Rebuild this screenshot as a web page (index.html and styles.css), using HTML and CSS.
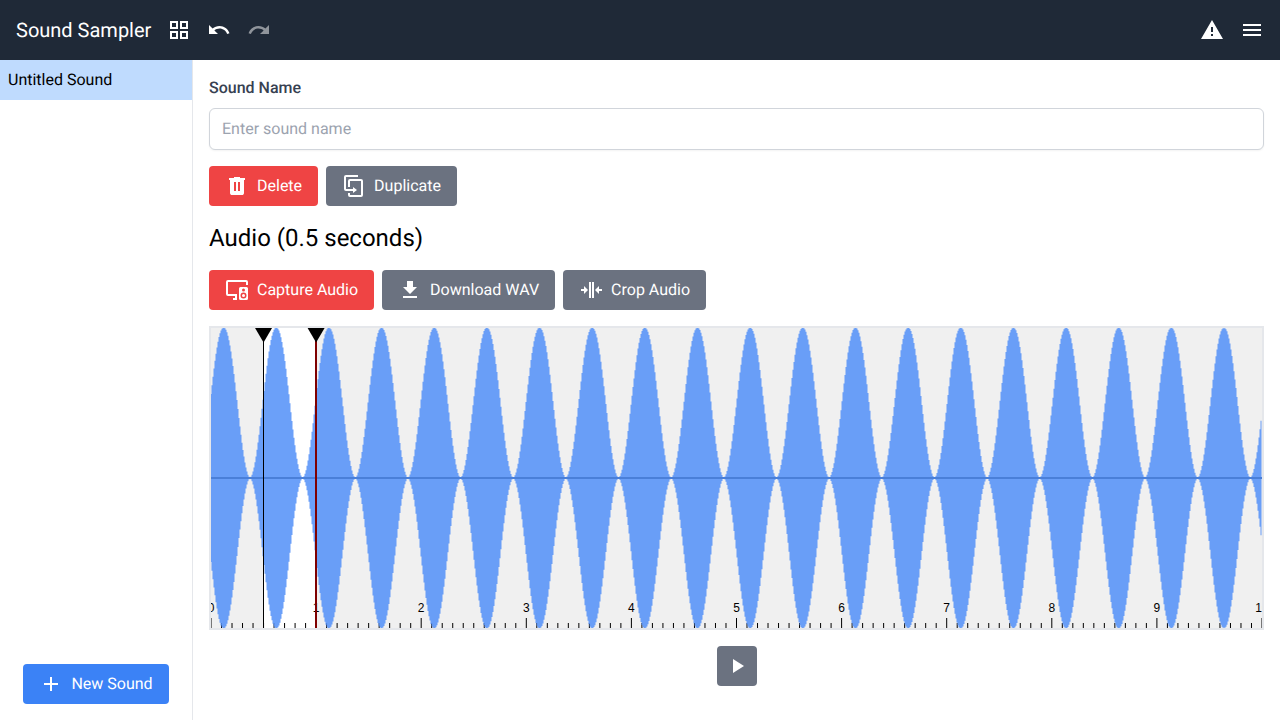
FILE: index.html
```html
<!DOCTYPE html>
<html lang="en">
<head>
<meta charset="utf-8">
<meta name="viewport" content="width=device-width, initial-scale=1">
<title>Sound Sampler</title>
<link rel="stylesheet" href="styles.css">
</head>
<body>
<div class="app">
  <header class="topbar">
    <h1 class="brand">Sound Sampler</h1>
    <button class="icon-button" type="button" aria-label="Apps">
      <svg class="icon" viewBox="0 0 24 24"><path d="M3 3v8h8V3H3zm6 6H5V5h4v4zm-6 4v8h8v-8H3zm6 6H5v-4h4v4zm4-16v8h8V3h-8zm6 6h-4V5h4v4zm-6 4v8h8v-8h-8zm6 6h-4v-4h4v4z"/></svg>
    </button>
    <button class="icon-button" type="button" aria-label="Undo">
      <svg class="icon" viewBox="0 0 24 24"><path d="M12.5 8c-2.65 0-5.05.99-6.9 2.6L2 7v9h9l-3.62-3.62c1.39-1.16 3.16-1.88 5.12-1.88 3.54 0 6.55 2.31 7.6 5.5l2.37-.78C21.08 11.03 17.15 8 12.5 8z"/></svg>
    </button>
    <button class="icon-button" type="button" aria-label="Redo" disabled>
      <svg class="icon" viewBox="0 0 24 24"><path d="M18.4 10.6C16.55 8.99 14.15 8 11.5 8c-4.65 0-8.58 3.03-9.96 7.22L3.9 16c1.05-3.19 4.05-5.5 7.6-5.5 1.95 0 3.73.72 5.12 1.88L13 16h9V7l-3.6 3.6z"/></svg>
    </button>
    <span class="spacer"></span>
    <button class="icon-button" type="button" aria-label="Warnings">
      <svg class="icon" viewBox="0 0 24 24"><path d="M13 14h-2V9h2m0 9h-2v-2h2M1 21h22L12 2 1 21z"/></svg>
    </button>
    <button class="icon-button" type="button" aria-label="Menu">
      <svg class="icon" viewBox="0 0 24 24"><path d="M3 18h18v-2H3v2zm0-5h18v-2H3v2zm0-7v2h18V6H3z"/></svg>
    </button>
  </header>
  <div class="body">
    <aside class="sidebar">
      <ul class="sounds">
        <li><button class="sound" type="button">Untitled Sound</button></li>
      </ul>
      <div class="sidebar-footer">
        <button class="button primary" type="button">
          <svg class="icon" viewBox="0 0 24 24"><path d="M19 13h-6v6h-2v-6H5v-2h6V5h2v6h6v2z"/></svg>
          New Sound
        </button>
      </div>
    </aside>
    <main class="editor">
      <div class="field">
        <label class="label" for="sound-name">Sound Name</label>
        <input class="input" id="sound-name" type="text" placeholder="Enter sound name">
      </div>
      <div class="actions">
        <button class="button danger" type="button">
          <svg class="icon" viewBox="0 0 24 24"><path fill-rule="evenodd" d="M7 21q-.825 0-1.412-.587T5 19V6H4V4h5V3h6v1h5v2h-1v13q0 .825-.587 1.413T17 21zm2-4h2V8H9zm4 0h2V8h-2z"/></svg>
          Delete
        </button>
        <button class="button neutral" type="button">
          <svg class="icon" viewBox="0 0 24 24"><path d="M11 17H4a2 2 0 0 1-2-2V3a2 2 0 0 1 2-2h12v2H4v12h7v-2l4 3-4 3v-2m8 4V7H8v6H6V7a2 2 0 0 1 2-2h11a2 2 0 0 1 2 2v14a2 2 0 0 1-2 2H8a2 2 0 0 1-2-2v-2h2v2h11z"/></svg>
          Duplicate
        </button>
      </div>
      <h2 class="heading">Audio (0.5 seconds)</h2>
      <div class="actions">
        <button class="button danger" type="button">
          <svg class="icon" viewBox="0 0 24 24"><path fill-rule="evenodd" d="M3 2h18a2 2 0 0 1 2 2v3h-2V4H3v12h9v6H8v-2h2v-2H3a2 2 0 0 1-2-2V4a2 2 0 0 1 2-2zM15.500 9h6a1.500 1.500 0 0 1 1.500 1.500v10a1.500 1.500 0 0 1-1.500 1.500h-6a1.500 1.500 0 0 1-1.500-1.500v-10A1.500 1.500 0 0 1 15.500 9zm3 1.500a1.500 1.500 0 1 0 0 3 1.500 1.500 0 0 0 0-3zm0 4a3 3 0 1 0 0 6 3 3 0 0 0 0-6zm0 1.500a1.500 1.500 0 1 1 0 3 1.500 1.500 0 0 1 0-3z"/></svg>
          Capture Audio
        </button>
        <button class="button neutral" type="button">
          <svg class="icon" viewBox="0 0 24 24"><path d="M5 20h14v-2H5m14-9h-4V3H9v6H5l7 7 7-7z"/></svg>
          Download WAV
        </button>
        <button class="button neutral" type="button">
          <svg class="icon" viewBox="0 0 24 24"><path d="M13 20V4h2v16h-2m-3 0V4h2v16h-2M5 8l4 4-4 4v-3H2v-2h3V8m15 8-4-4 4-4v3h3v2h-3v3z"/></svg>
          Crop Audio
        </button>
      </div>
      <svg class="waveform" id="waveform" role="img" aria-label="Audio waveform"></svg>
      <div class="transport">
        <button class="button neutral play" type="button" aria-label="Play">
          <svg class="icon" viewBox="0 0 24 24"><path d="M8 5v14l11-7z"/></svg>
        </button>
      </div>
    </main>
  </div>
</div>
<script src="waveform.js"></script>
</body>
</html>
```
FILE: styles.css
```css
*, *::before, *::after { box-sizing: border-box; }

body {
  margin: 0;
  font: 16px/24px Roboto, sans-serif;
  text-rendering: geometricPrecision;
  color: #000;
  background: #fff;
}

button, input { font: inherit; text-rendering: inherit; }
h1, h2, ul { margin: 0; padding: 0; font-weight: 400; }

.app { display: flex; flex-direction: column; min-height: 100vh; }

.topbar {
  display: flex;
  align-items: center;
  gap: 16px;
  padding: 16px;
  color: #fff;
  background: #1f2937;
}
.brand { font-size: 20px; line-height: 28px; }
.spacer { flex: 1; }

.icon { display: block; width: 24px; height: 24px; fill: currentColor; flex: none; }
.icon-button { padding: 0; border: 0; color: inherit; background: none; cursor: pointer; }
.icon-button:disabled { opacity: 0.5; cursor: default; }

.body { display: flex; flex: 1; }

.sidebar {
  display: flex;
  flex-direction: column;
  flex: none;
  width: 193px;
  border-right: 1px solid #e5e7eb;
}
.sounds { flex: 1; list-style: none; }
.sound {
  display: block;
  width: 100%;
  padding: 8px;
  border: 0;
  color: #000;
  text-align: left;
  background: #bfdbfe;
}
.sidebar-footer { display: flex; justify-content: center; padding: 16px; }

.editor {
  display: flex;
  flex-direction: column;
  flex: 1;
  gap: 16px;
  min-width: 0;
  padding: 16px;
}
.field { display: flex; flex-direction: column; gap: 8px; }
.label { color: #374151; font-weight: 500; }
.input {
  width: 100%;
  padding: 8px 12px;
  border: 1px solid #d1d5db;
  border-radius: 6px;
  background: #fff;
  box-shadow: 0 1px 2px rgba(0, 0, 0, 0.05);
}
.input::placeholder { color: #9ca3af; opacity: 1; }

.actions { display: flex; flex-wrap: wrap; gap: 8px; }
.button {
  display: flex;
  align-items: center;
  gap: 8px;
  padding: 8px 16px;
  border: 0;
  border-radius: 4px;
  color: #fff;
  cursor: pointer;
}
.primary { background: #3b82f6; }
.danger { background: #ef4444; }
.neutral { background: #6b7280; }
.play { padding: 8px; }

.heading { font-size: 24px; line-height: 32px; }

.waveform {
  display: block;
  width: 100%;
  height: 304px;
  border: 2px solid #e5e7eb;
  background: #fff;
  text-rendering: auto;
}
.wave { fill: #5592f8; fill-opacity: 0.87; }
.axis { fill: #4a7fd8; }
.shade { fill: #f0f0f0; }
.tick { stroke: #000; stroke-width: 1; }
.tick-label { font: 12px/16px "Liberation Sans", sans-serif; text-anchor: middle; }
.marker-line { stroke: #000; stroke-width: 1; }
.playhead { fill: #7f0000; }

.transport { display: flex; justify-content: center; }
```
FILE: waveform.js
```js
const svg = document.getElementById("waveform");
const NS = "http://www.w3.org/2000/svg";
const SECONDS = 10;
const HEIGHT = 300;

function add(tag, attrs, text) {
  const el = document.createElementNS(NS, tag);
  for (const key in attrs) el.setAttribute(key, attrs[key]);
  if (text !== undefined) el.textContent = text;
  svg.appendChild(el);
}

function draw() {
  svg.replaceChildren();
  const width = svg.getBoundingClientRect().width - 4;
  const mid = HEIGHT / 2;
  const second = width / SECONDS;
  const period = (width + 2) / 20;
  const level = x => (1 + Math.sin(2 * Math.PI * x / period)) / 2;
  const start = second / 2;
  const end = second;

  add("rect", { class: "shade", x: 0, y: 0, width: Math.round(start), height: HEIGHT });
  add("rect", { class: "shade", x: Math.round(end), y: 0, width: width - Math.round(end), height: HEIGHT });

  for (let i = 0; i <= SECONDS * 10; i++) {
    const x = i * second / 10;
    const major = i % 10 === 0;
    add("line", { class: "tick", x1: x, x2: x, y1: HEIGHT - (major ? 10 : 5), y2: HEIGHT });
    if (major) add("text", { class: "tick-label", x, y: 284 }, i / 10);
  }

  let top = `M-0.5 ${mid}`;
  let bottom = "";
  for (let x = 0; x < width; x++) {
    const h = Math.max(level(x), level(x + 1)) * mid;
    top += `V${mid - h}H${x + 0.5}`;
    bottom = `V${mid + h}H${x - 0.5}` + bottom;
  }
  add("path", { class: "wave", d: top + bottom + "Z" });
  add("rect", { class: "axis", x: 0, y: mid - 1, width, height: 2 });

  const startLine = Math.floor(start) + 0.5;
  add("line", { class: "marker-line", x1: startLine, x2: startLine, y1: 0, y2: HEIGHT });
  add("rect", { class: "playhead", x: Math.round(end) - 1, y: 0, width: 2, height: HEIGHT });
  for (const x of [start, end]) {
    add("path", { d: `M${x - 8.5} 0h17l-8.5 14.5z` });
  }
}

draw();
window.addEventListener("resize", draw);
```
